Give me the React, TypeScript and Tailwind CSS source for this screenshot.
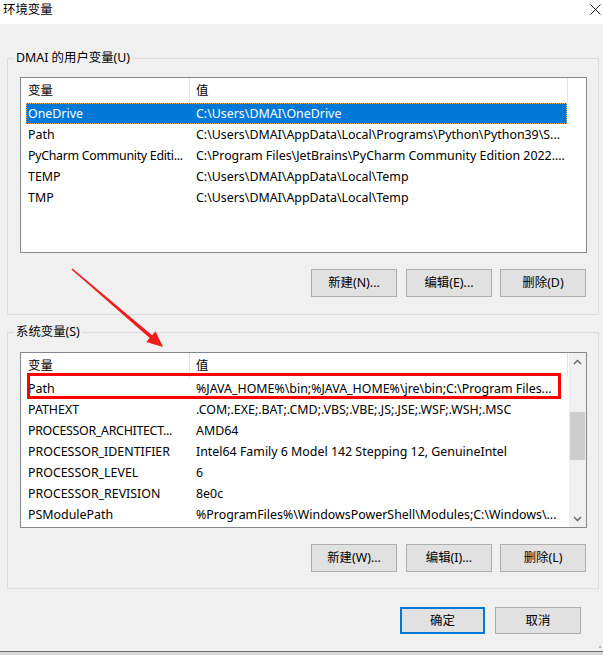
import React from "react";

const FONT = { fontFamily: '"Noto Sans", "Noto Sans CJK SC", sans-serif' };

const userVars: [string, string][] = [
  ["OneDrive", "C:\\Users\\DMAI\\OneDrive"],
  ["Path", "C:\\Users\\DMAI\\AppData\\Local\\Programs\\Python\\Python39\\S..."],
  ["PyCharm Community Editi...", "C:\\Program Files\\JetBrains\\PyCharm Community Edition 2022...."],
  ["TEMP", "C:\\Users\\DMAI\\AppData\\Local\\Temp"],
  ["TMP", "C:\\Users\\DMAI\\AppData\\Local\\Temp"],
];

const sysVars: [string, string][] = [
  ["Path", "%JAVA_HOME%\\bin;%JAVA_HOME%\\jre\\bin;C:\\Program Files..."],
  ["PATHEXT", ".COM;.EXE;.BAT;.CMD;.VBS;.VBE;.JS;.JSE;.WSF;.WSH;.MSC"],
  ["PROCESSOR_ARCHITECT...", "AMD64"],
  ["PROCESSOR_IDENTIFIER", "Intel64 Family 6 Model 142 Stepping 12, GenuineIntel"],
  ["PROCESSOR_LEVEL", "6"],
  ["PROCESSOR_REVISION", "8e0c"],
  ["PSModulePath", "%ProgramFiles%\\WindowsPowerShell\\Modules;C:\\Windows\\..."],
];

function Chevron({ up }: { up: boolean }) {
  return (
    <svg width="9" height="6" viewBox="0 0 9 6">
      <path
        d={up ? "M1 5 L4.5 1.5 L8 5" : "M1 1 L4.5 4.5 L8 1"}
        fill="none"
        stroke="#606060"
        strokeWidth="1.3"
      />
    </svg>
  );
}

function Scrollbar() {
  return (
    <div className="w-[17px] flex flex-col bg-[#f0f0f0]">
      <div className="h-[17px] flex items-center justify-center">
        <Chevron up />
      </div>
      <div className="flex-1">
        <div className="mt-[42px] h-[48px] mx-px bg-[#cdcdcd]" />
      </div>
      <div className="h-[17px] flex items-center justify-center">
        <Chevron up={false} />
      </div>
    </div>
  );
}

function List({
  rows,
  selected,
  scroll,
}: {
  rows: [string, string][];
  selected?: number;
  scroll?: boolean;
}) {
  return (
    <div className="h-[176px] border border-[#828790] bg-white flex">
      <div className="flex-1 min-w-0 flex flex-col">
        <div className="h-[25px] flex items-stretch">
          <div className="w-[168px] pl-[7px] flex items-center">变量</div>
          <div className="w-px bg-[#e5e5e5]" />
          <div className="w-[377px] pl-[6px] flex items-center">值</div>
          <div className="w-px bg-[#e5e5e5]" />
        </div>
        {rows.map(([k, v], i) => {
          const sel = i === selected;
          const trunc = k.endsWith("...");
          return (
            <div
              key={k}
              className={
                sel
                  ? "ml-[5px] w-[541px] h-[21px] flex items-center bg-[#0078d7] text-white outline-1 outline-dotted outline-[#f0a860] -outline-offset-1"
                  : "ml-[5px] w-[541px] h-[21px] flex items-center"
              }
            >
              <div
                className={
                  trunc
                    ? "w-[163px] pl-[2px] whitespace-nowrap overflow-hidden tracking-[-0.3px]"
                    : "w-[163px] pl-[2px] whitespace-nowrap overflow-hidden"
                }
              >
                {k}
              </div>
              <div className="flex-1 pl-[7px] whitespace-nowrap overflow-hidden">{v}</div>
            </div>
          );
        })}
      </div>
      {scroll ? <Scrollbar /> : <div className="w-[17px]" />}
    </div>
  );
}

function Btn({ children, primary }: { children: React.ReactNode; primary?: boolean }) {
  return (
    <div
      className={
        primary
          ? "w-[85px] h-[27px] flex items-center justify-center bg-[#e1e1e1] border-2 border-[#0078d7]"
          : "w-[86px] h-[27px] flex items-center justify-center bg-[#e1e1e1] border border-[#adadad]"
      }
    >
      {children}
    </div>
  );
}

function Group({
  title,
  rows,
  selected,
  scroll,
  buttons,
  listGap,
  bottomPad,
  className,
}: {
  title: string;
  rows: [string, string][];
  selected?: number;
  scroll?: boolean;
  buttons: string[];
  listGap: string;
  bottomPad: string;
  className: string;
}) {
  return (
    <div className={"ml-[7px] w-[592px] border border-[#dcdcdc] pl-[12px] pr-[11px] " + bottomPad + " " + className}>
      <div className="-mt-[9px] -ml-[6px] px-[2px] w-fit h-[16px] leading-[16px] bg-[#f0f0f0]">
        {title}
      </div>
      <div className={listGap}>
        <List rows={rows} selected={selected} scroll={scroll} />
      </div>
      <div className="mt-[16px] flex justify-end">
        <div className="h-[28px] w-[86px] flex items-center justify-center bg-[#e1e1e1] border border-[#adadad]">
          {buttons[0]}
        </div>
        <div className="ml-[9px] h-[28px] w-[86px] flex items-center justify-center bg-[#e1e1e1] border border-[#adadad]">
          {buttons[1]}
        </div>
        <div className="ml-[8px] mr-px h-[28px] w-[86px] flex items-center justify-center bg-[#e1e1e1] border border-[#adadad]">
          {buttons[2]}
        </div>
      </div>
    </div>
  );
}

export default function App() {
  return (
    <div
      className="relative w-[603px] h-[655px] bg-[#f0f0f0] text-[12.4px] leading-[16px] text-black flex flex-col overflow-hidden"
      style={FONT}
    >
      <div className="h-[24px] bg-white flex items-start">
        <div className="pl-[3px] pt-[2px]">环境变量</div>
        <div className="ml-auto mr-[2px] mt-[4px]">
          <svg width="11" height="11" viewBox="0 0 11 11">
            <path d="M0.5 0.5 L10.5 10.5 M10.5 0.5 L0.5 10.5" stroke="#222" strokeWidth="1" />
          </svg>
        </div>
      </div>

      <Group
        className="mt-[34px]"
        title="DMAI 的用户变量(U)"
        rows={userVars}
        selected={0}
        buttons={["新建(N)...", "编辑(E)...", "删除(D)"]}
        listGap="mt-[11px]"
        bottomPad="pb-[17px]"
      />

      <Group
        className="mt-[17px]"
        title="系统变量(S)"
        rows={sysVars}
        scroll
        buttons={["新建(W)...", "编辑(I)...", "删除(L)"]}
        listGap="mt-[12px]"
        bottomPad="pb-[16px]"
      />

      <div className="mt-[18px] flex justify-end pr-[22px]">
        <Btn primary>确定</Btn>
        <div className="ml-[10px]">
          <Btn>取消</Btn>
        </div>
      </div>

      <div className="mt-auto h-[4px] border-t border-[#707070] bg-[#d9d9d9]" />

      <div className="absolute left-[599px] top-[646px] w-[2px] h-[2px] bg-[#b0b0b0]" />

      <div className="absolute left-[27px] top-[373px] w-[534px] h-[26px] border-[3px] border-[#ff0000] pointer-events-none" />

      <svg
        className="absolute left-0 top-0 pointer-events-none"
        width="603"
        height="655"
        viewBox="0 0 603 655"
      >
        <path
          d="M71.5 269.6 L149.7 338.0 L146.3 341.9 L163 347 L155.5 331.3 L152.1 335.2 L72.5 268.4 Z"
          fill="#f21b1b"
        />
      </svg>
    </div>
  );
}
